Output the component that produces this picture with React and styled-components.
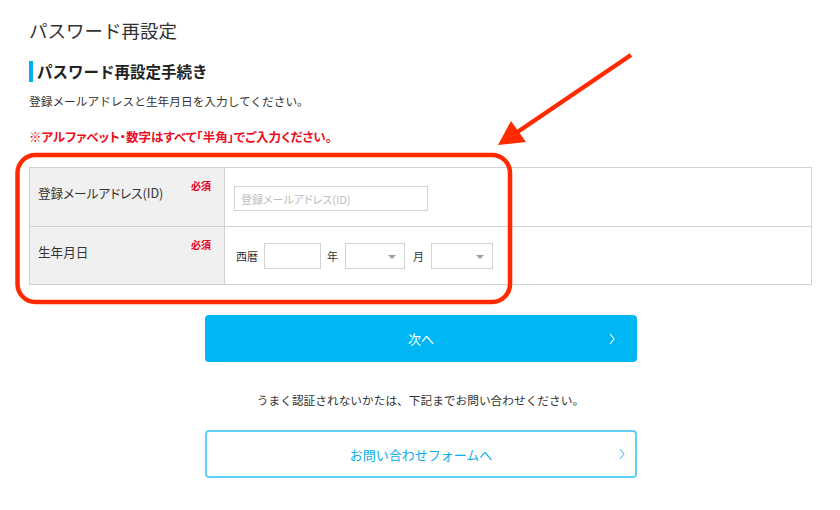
import React from 'react';
import styled, { createGlobalStyle } from 'styled-components';

const GlobalStyle = createGlobalStyle`
  html, body {
    margin: 0;
    padding: 0;
    background: #fff;
  }
  body {
    font-family: "Noto Sans CJK JP", "Noto Sans", sans-serif;
    color: #333;
  }
`;

const Page = styled.div`
  position: relative;
  width: 840px;
  height: 510px;
  padding: 0 28px 0 29px;
  box-sizing: border-box;
  overflow: hidden;
`;

const Title = styled.h1`
  margin: 17px 0 0;
  font-size: 18.5px;
  line-height: 26px;
  font-weight: 400;
  color: #333;
`;

const Heading = styled.h2`
  margin: 18px 0 0;
  padding-left: 4px;
  border-left: 4px solid #00b0ec;
  font-size: 15.5px;
  line-height: 21px;
  font-weight: 700;
  color: #222;
`;

const Lead = styled.p`
  margin: ${(p) => p.$top}px 0 0;
  font-size: ${(p) => (p.$alert ? 12.5 : 11.7)}px;
  line-height: 18px;
  font-weight: ${(p) => (p.$alert ? 700 : 400)};
  color: ${(p) => (p.$alert ? '#ea0f1e' : '#333')};
  font-feature-settings: ${(p) => (p.$alert ? '"palt"' : 'normal')};
`;

const Table = styled.div`
  margin-top: 21px;
  border: 1px solid #d2d2d2;
  display: grid;
  grid-template-columns: 195px 1fr;
`;

const LabelCell = styled.div`
  position: relative;
  height: 58px;
  box-sizing: border-box;
  background: #f0f0f0;
  border-right: 1px solid #d2d2d2;
  border-top: ${(p) => (p.$first ? 'none' : '1px solid #d2d2d2')};
  padding: 16px 13px 0 8px;
  display: flex;
  justify-content: space-between;
  align-items: flex-start;
`;

const LabelText = styled.span`
  font-size: 12.6px;
  line-height: 18px;
  color: #333;
  font-feature-settings: "palt";
`;

const Required = styled.span`
  font-size: 10px;
  line-height: 12px;
  margin-top: -4px;
  font-weight: 700;
  color: #e60012;
`;

const FieldCell = styled.div`
  height: 58px;
  box-sizing: border-box;
  border-top: ${(p) => (p.$first ? 'none' : '1px solid #d2d2d2')};
  padding: ${(p) => (p.$first ? '3px 0 0 9px' : '0 0 0 11px')};
  display: flex;
  align-items: center;
`;

const TextInput = styled.input`
  width: ${(p) => p.$w}px;
  height: ${(p) => p.$h}px;
  box-sizing: border-box;
  border: 1px solid #d4d4d4;
  border-radius: 0;
  padding: 0 6px;
  margin: 0 6px 0 0;
  font-family: inherit;
  font-size: 11px;
  font-feature-settings: "palt";
  color: #333;
  outline: none;
  &::placeholder {
    color: #bdbdbd;
  }
`;

const Unit = styled.span`
  font-size: 11px;
  color: #333;
  margin-right: ${(p) => p.$mr}px;
`;

const SelectBox = styled.div`
  position: relative;
  width: ${(p) => p.$w}px;
  height: 26px;
  box-sizing: border-box;
  border: 1px solid #d4d4d4;
  margin-right: 8px;
  background: #fff;
  &::after {
    content: "";
    position: absolute;
    right: 8px;
    top: 11px;
    border-left: 4px solid transparent;
    border-right: 4px solid transparent;
    border-top: 4px solid #999;
  }
`;

const Actions = styled.div`
  display: flex;
  flex-direction: column;
  align-items: center;
  padding-top: 30px;
`;

const Button = styled.a`
  position: relative;
  width: 432px;
  height: ${(p) => (p.$outline ? 48 : 47)}px;
  box-sizing: border-box;
  border-radius: 4px;
  display: flex;
  align-items: center;
  justify-content: center;
  font-size: 13px;
  text-decoration: none;
  background: ${(p) => (p.$outline ? '#fff' : '#00b7f3')};
  color: ${(p) => (p.$outline ? '#0aaee9' : '#fff')};
  border: ${(p) => (p.$outline ? '2px solid #62d1f7' : 'none')};
  margin-left: 1px;
`;

const Chevron = styled.svg`
  position: absolute;
  right: ${(p) => p.$right}px;
  top: 50%;
  margin-top: -6px;
`;

const Help = styled.p`
  margin: 30px 0 0;
  font-size: 11.7px;
  line-height: 16px;
  color: #333;
`;

const ContactWrap = styled.div`
  margin-top: 22px;
`;

const Overlay = styled.svg`
  position: absolute;
  left: 0;
  top: 0;
  pointer-events: none;
`;

function Arrow({ right, color }) {
  return (
    <Chevron $right={right} width="6" height="12" viewBox="0 0 6 12">
      <polyline points="1,1 5,6 1,11" fill="none" stroke={color} strokeWidth="1.1" />
    </Chevron>
  );
}

export default function App() {
  return (
    <>
      <GlobalStyle />
      <Page>
        <Title>パスワード再設定</Title>
        <Heading>パスワード再設定手続き</Heading>
        <Lead $top={10}>登録メールアドレスと生年月日を入力してください。</Lead>
        <Lead $top={18} $alert>※アルファベット・数字はすべて「半角」でご入力ください。</Lead>

        <Table>
          <LabelCell $first>
            <LabelText>登録メールアドレス(ID)</LabelText>
            <Required>必須</Required>
          </LabelCell>
          <FieldCell $first>
            <TextInput $w={194} $h={25} placeholder="登録メールアドレス(ID)" />
          </FieldCell>
          <LabelCell>
            <LabelText>生年月日</LabelText>
            <Required>必須</Required>
          </LabelCell>
          <FieldCell>
            <Unit $mr={6}>西暦</Unit>
            <TextInput $w={57} $h={26} />
            <Unit $mr={7}>年</Unit>
            <SelectBox $w={60} />
            <Unit $mr={7}>月</Unit>
            <SelectBox $w={62} />
          </FieldCell>
        </Table>

        <Actions>
          <Button href="#">
            次へ
            <Arrow right={22} color="#fff" />
          </Button>
          <Help>うまく認証されないかたは、下記までお問い合わせください。</Help>
          <ContactWrap>
            <Button href="#" $outline>
              お問い合わせフォームへ
              <Arrow right={10} color="#4fc8f3" />
            </Button>
          </ContactWrap>
        </Actions>

        <Overlay width="840" height="510" viewBox="0 0 840 510">
          <rect x="17.5" y="155" width="492.5" height="147" rx="18" ry="18"
            fill="none" stroke="#ff2a00" strokeWidth="4.5" />
          <line x1="631" y1="55" x2="516" y2="133" stroke="#ff2a00" strokeWidth="4.5" />
          <polygon points="498,145 511,121 526,142" fill="#ff2a00" />
        </Overlay>
      </Page>
    </>
  );
}
